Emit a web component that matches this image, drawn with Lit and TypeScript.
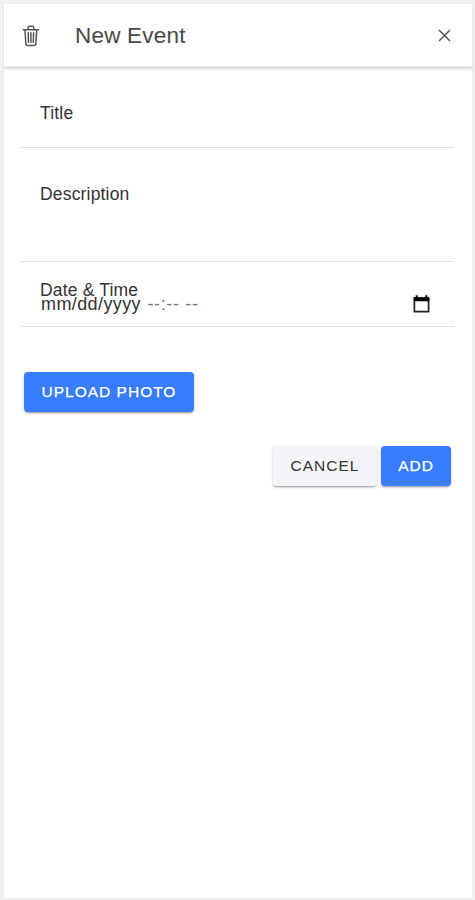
import { LitElement, html, css } from "lit";
import { customElement } from "lit/decorators.js";

@customElement("app-root")
export class AppRoot extends LitElement {
  static styles = css`
    :host {
      display: block;
      box-sizing: border-box;
      height: 900px;
      padding: 4px 3px 2px 4px;
      background: #f0f1f2;
      font-family: "Liberation Sans", Arial, sans-serif;
      color: #333;
      overflow: hidden;
    }
    .modal {
      height: 894px;
      background: #fff;
      box-shadow: 0 0 1px #ddd;
    }
    header {
      display: flex;
      align-items: center;
      height: 63px;
      background: #fff;
      border-bottom: 1px solid #ececec;
      box-shadow: 0 2px 2px #d8d8d8;
      box-sizing: border-box;
      padding: 0 21px 0 18px;
    }
    .trash { width: 18px; height: 22px; margin-top: 1px; }
    h1 {
      flex: 1;
      margin: 1px 0 0 35px;
      font-size: 22.5px;
      letter-spacing: 0.2px;
      font-weight: 400;
      line-height: 28px;
      color: #484848;
    }
    .close { width: 13px; height: 13px; margin-top: 1px; }
    svg { display: block; }
    .field {
      box-sizing: border-box;
      margin: 0 18px 0 17px;
      padding-left: 19px;
      border-bottom: 1px solid #e0e0e0;
      font-size: 17.5px;
      letter-spacing: 0.18px;
      line-height: 20px;
    }
    .title { height: 81px; padding-top: 36px; }
    .description { height: 114px; padding-top: 36px; }
    .date { height: 65px; padding-top: 18px; }
    .entry {
      display: flex;
      align-items: center;
      justify-content: space-between;
      height: 20px;
      margin-top: -6px;
      padding: 0 23px 0 1px;
      font-size: 18px;
      letter-spacing: 0.4px;
    }
    .blank { color: #777; margin-left: 1px; letter-spacing: 0.65px; }
    .calendar { width: 19px; height: 20px; }
    .upload { display: flex; padding: 45px 20px 0; }
    .actions {
      display: flex;
      justify-content: flex-end;
      gap: 4px;
      padding: 34px 21px 0;
    }
    button {
      box-sizing: border-box;
      height: 40px;
      padding: 0;
      border: 0;
      border-radius: 4px;
      font: 400 15.5px/40px "Liberation Sans", Arial, sans-serif;
      letter-spacing: 1px;
      color: #fff;
      background: #387cff;
      -webkit-text-stroke: 0.25px currentColor;
      box-shadow: 0 2px 2px -1px rgba(0, 0, 0, 0.3), 0 1px 3px rgba(0, 0, 0, 0.18);
    }
    .photo { width: 170px; }
    .cancel {
      width: 104px;
      background: #f4f5f8;
      color: #333;
      -webkit-text-stroke: 0;
    }
    .add { width: 70px; }
  `;

  render() {
    return html`
      <div class="modal">
        <header>
          <svg class="trash" viewBox="0 0 18 22" fill="none" stroke="#555" stroke-width="1.5" stroke-linecap="round" stroke-linejoin="round">
            <path d="M1.3 4.7h15.2M3 4.7l.8 13.8q.1 1.9 2 1.9h6.2q1.8 0 1.9-1.9l.8-13.8M6 4.5V2.8q0-1.5 1.5-1.5h2.8q1.5 0 1.5 1.5v1.7M8.9 7.7v9.6M6.2 7.7l.3 9.6M11.6 7.7l-.3 9.6" />
          </svg>
          <h1>New Event</h1>
          <svg class="close" viewBox="0 0 13 13" fill="none" stroke="#555" stroke-width="1.5">
            <path d="M1 1l11 11M12 1L1 12" />
          </svg>
        </header>
        <div class="field title">Title</div>
        <div class="field description">Description</div>
        <div class="field date">
          <div>Date &amp; Time</div>
          <div class="entry">
            <span>mm/dd/yyyy <span class="blank">--:-- --</span></span>
            <svg class="calendar" viewBox="0 0 19 20">
              <path d="M2.4 4h14.2v13.7H2.4z" fill="none" stroke="#222" stroke-width="1.7" stroke-linejoin="round" />
              <path d="M1.7 3.2h15.6v4H1.7zM3.7 1.2h2v3h-2zM13.3 1.2h2v3h-2z" fill="#000" />
            </svg>
          </div>
        </div>
        <div class="upload"><button class="photo">UPLOAD PHOTO</button></div>
        <div class="actions">
          <button class="cancel">CANCEL</button>
          <button class="add">ADD</button>
        </div>
      </div>
    `;
  }
}
